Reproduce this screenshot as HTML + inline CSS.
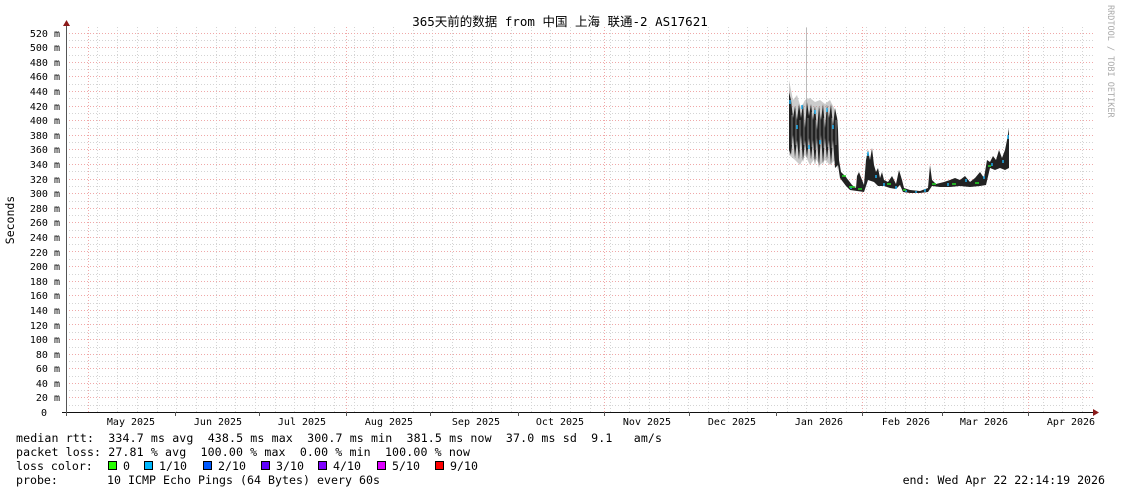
<!DOCTYPE html>
<html><head><meta charset="utf-8"><style>
html,body{margin:0;padding:0;background:#fff;}
svg{display:block;}
text{font-family:"DejaVu Sans Mono","Liberation Mono","Noto Sans CJK SC",monospace;}
</style></head><body>
<svg width="1121" height="494" xmlns="http://www.w3.org/2000/svg">
<rect width="1121" height="494" fill="#fff"/>
<g id="grid" stroke-width="1" shape-rendering="crispEdges">
<g stroke="#d4d4d4" stroke-dasharray="1,2">
<path d="M66 405.5H1093M66 390.5H1093M66 376.5H1093M66 361.5H1093M66 347.5H1093M66 332.5H1093M66 317.5H1093M66 303.5H1093M66 288.5H1093M66 274.5H1093M66 259.5H1093M66 244.5H1093M66 230.5H1093M66 215.5H1093M66 201.5H1093M66 186.5H1093M66 171.5H1093M66 157.5H1093M66 142.5H1093M66 128.5H1093M66 113.5H1093M66 98.5H1093M66 84.5H1093M66 69.5H1093M66 55.5H1093M66 40.5H1093"/>
<path d="M97.5 27V412M117.5 27V412M137.5 27V412M157.5 27V412M176.5 27V412M196.5 27V412M216.5 27V412M235.5 27V412M255.5 27V412M275.5 27V412M294.5 27V412M314.5 27V412M334.5 27V412M354.5 27V412M373.5 27V412M393.5 27V412M413.5 27V412M432.5 27V412M452.5 27V412M472.5 27V412M491.5 27V412M511.5 27V412M531.5 27V412M550.5 27V412M570.5 27V412M590.5 27V412M610.5 27V412M629.5 27V412M649.5 27V412M669.5 27V412M688.5 27V412M708.5 27V412M728.5 27V412M747.5 27V412M767.5 27V412M787.5 27V412M806.5 27V412M826.5 27V412M846.5 27V412M866.5 27V412M885.5 27V412M905.5 27V412M925.5 27V412M944.5 27V412M964.5 27V412M984.5 27V412M1003.5 27V412M1023.5 27V412M1043.5 27V412M1062.5 27V412M1082.5 27V412"/>
</g>
<g stroke="#f0a8a8" stroke-dasharray="1,2">
<path d="M66 397.5H1093M66 383.5H1093M66 368.5H1093M66 354.5H1093M66 339.5H1093M66 324.5H1093M66 310.5H1093M66 295.5H1093M66 281.5H1093M66 266.5H1093M66 251.5H1093M66 237.5H1093M66 222.5H1093M66 208.5H1093M66 193.5H1093M66 179.5H1093M66 164.5H1093M66 149.5H1093M66 135.5H1093M66 120.5H1093M66 106.5H1093M66 91.5H1093M66 76.5H1093M66 62.5H1093M66 47.5H1093M66 33.5H1093"/>
<path d="M88.5 27V412M346.5 27V412M604.5 27V412M862.5 27V412M1028.5 27V412"/>
</g>
</g>
<path d="M806.5 28V130" stroke="#bbb" stroke-width="1"/>
<polygon fill="#999" opacity="0.5" points="789,80 793,100 797,95 801,108 805,100 810,98 815,102 820,100 825,104 830,100 835,110 838,120 838,170 835,160 830,165 825,160 820,165 815,158 810,165 805,155 800,165 795,160 789,155"/>
<polygon fill="#222" points="789,92 791,100 793,118 795,106 797,120 799,104 801,118 803,104 805,128 807,102 809,116 811,104 813,120 815,106 817,130 819,106 821,120 823,104 825,128 827,105 829,118 831,104 833,126 835,108 837,118 838,130 839,160 841,172 845,176 849,181 852,185 856,188 857,176 859,172 862,180 864,185 866,160 868,150 870,160 872,148 874,165 876,172 878,168 880,178 882,172 884,180 888,182 892,176 896,184 899,170 902,180 904,188 910,190 920,191 928,188 930,165 932,180 936,184 944,182 950,180 955,178 960,180 965,176 970,182 975,178 980,172 984,178 987,160 990,162 993,156 996,160 999,150 1002,158 1005,150 1007,140 1009,128 1009,168 1005,170 1000,168 995,170 990,168 986,185 980,186 970,187 960,186 950,187 940,187 932,186 928,192 920,193 910,193 903,192 900,185 896,189 890,188 884,186 878,186 874,182 868,180 864,192 857,191 850,190 846,186 840,178 838,165 835,168 833,140 831,165 829,140 827,160 825,138 823,165 821,135 819,168 817,138 815,165 813,140 811,160 809,138 807,158 805,140 803,162 801,135 799,160 797,140 795,158 793,135 791,155 789,150"/>
<g stroke="#fff" stroke-width="0.8" opacity="0.5">
<path d="M792 115v30M796 110v35M800 120v30M804 110v35M808 118v30M812 112v35M816 120v30M820 110v35M824 118v30M828 112v35M832 118v30M836 120v25"/>
</g>
<g stroke="#1fb0f0" stroke-width="1.5" fill="none">
<path d="M790 100v4M797 125v4M802 105v4M809 145v4M815 110v4M820 140v4M827 108v4M833 125v4M851 186v3M868 152v4M876 175v3M884 183v3M896 186v3M906 190v2M916 191v2M925 189v3M948 183v3M966 179v3M984 176v3M992 163v3M1003 160v3M1008 135v4"/>
</g>
<g stroke="#22dd22" stroke-width="1.5" fill="none">
<path d="M842 176h4M849 187h6M858 189h4M887 184h4M903 190h3M932 184h4M952 184h4M975 183h4M988 166h3"/>
</g>
<path d="M66.5 24V412" stroke="#555" stroke-width="1"/>
<path d="M62 412.5H1096" stroke="#111" stroke-width="1"/>
<polygon points="63,26 70,26 66.5,20" fill="#8b1a1a"/>
<polygon points="1093,409 1093,416 1099,412.5" fill="#8b1a1a"/>
<path d="M66.5 412v4M175.5 412v4M259.5 412v4M346.5 412v4M430.5 412v4M518.5 412v4M604.5 412v4M689.5 412v4M776.5 412v4M862.5 412v4M942.5 412v4M1028.5 412v4" stroke="#555"/>
<text x="560" y="26" font-size="12.5" text-anchor="middle" font-family="'DejaVu Sans Mono','Noto Sans CJK SC',monospace">365天前的数据 from 中国 上海 联通-2 AS17621</text>
<text transform="translate(14,220) rotate(-90)" font-size="11.5" text-anchor="middle">Seconds</text>
<text transform="translate(1108,5) rotate(90)" font-size="8.5" fill="#aaa">RRDTOOL / TOBI OETIKER</text>
<g font-size="10" text-anchor="end">
<text x="60" y="37">520 m</text><text x="60" y="51">500 m</text><text x="60" y="66">480 m</text><text x="60" y="80">460 m</text><text x="60" y="95">440 m</text><text x="60" y="110">420 m</text><text x="60" y="124">400 m</text><text x="60" y="139">380 m</text><text x="60" y="153">360 m</text><text x="60" y="168">340 m</text><text x="60" y="183">320 m</text><text x="60" y="197">300 m</text><text x="60" y="212">280 m</text><text x="60" y="226">260 m</text><text x="60" y="241">240 m</text><text x="60" y="256">220 m</text><text x="60" y="270">200 m</text><text x="60" y="285">180 m</text><text x="60" y="299">160 m</text><text x="60" y="314">140 m</text><text x="60" y="329">120 m</text><text x="60" y="343">100 m</text><text x="60" y="358">80 m</text><text x="60" y="372">60 m</text><text x="60" y="387">40 m</text><text x="60" y="401">20 m</text><text x="47" y="416">0</text>
</g>
<g font-size="10" text-anchor="middle">
<text x="131" y="425">May 2025</text><text x="218" y="425">Jun 2025</text><text x="302" y="425">Jul 2025</text><text x="389" y="425">Aug 2025</text><text x="476" y="425">Sep 2025</text><text x="560" y="425">Oct 2025</text><text x="647" y="425">Nov 2025</text><text x="732" y="425">Dec 2025</text><text x="819" y="425">Jan 2026</text><text x="906" y="425">Feb 2026</text><text x="984" y="425">Mar 2026</text><text x="1071" y="425">Apr 2026</text>
</g>
<g font-size="11.6">
<text x="16" y="442" textLength="646">median rtt:&#160;&#160;334.7 ms avg&#160;&#160;438.5 ms max&#160;&#160;300.7 ms min&#160;&#160;381.5 ms now&#160;&#160;37.0 ms sd&#160;&#160;9.1&#160;&#160;&#160;am/s</text>
<text x="16" y="456" textLength="454">packet loss: 27.81 % avg&#160;&#160;100.00 % max&#160;&#160;0.00 % min&#160;&#160;100.00 % now</text>
<text x="16" y="470">loss color:</text>
<text x="123" y="470">0</text>
<text x="159" y="470">1/10</text>
<text x="218" y="470">2/10</text>
<text x="276" y="470">3/10</text>
<text x="333" y="470">4/10</text>
<text x="392" y="470">5/10</text>
<text x="450" y="470">9/10</text>
<text x="16" y="484">probe:</text>
<text x="107" y="484" textLength="273">10 ICMP Echo Pings (64 Bytes) every 60s</text>
<text x="1105" y="484" text-anchor="end">end: Wed Apr 22 22:14:19 2026</text>
</g>
<g stroke="#000" stroke-width="1">
<rect x="108.5" y="461.5" width="8" height="8" fill="#26ff00"/>
<rect x="144.5" y="461.5" width="8" height="8" fill="#00b8ff"/>
<rect x="203.5" y="461.5" width="8" height="8" fill="#0059ff"/>
<rect x="261.5" y="461.5" width="8" height="8" fill="#5e00ff"/>
<rect x="318.5" y="461.5" width="8" height="8" fill="#7e00ff"/>
<rect x="377.5" y="461.5" width="8" height="8" fill="#dd00ff"/>
<rect x="435.5" y="461.5" width="8" height="8" fill="#ff0000"/>
</g>
</svg>
</body></html>
